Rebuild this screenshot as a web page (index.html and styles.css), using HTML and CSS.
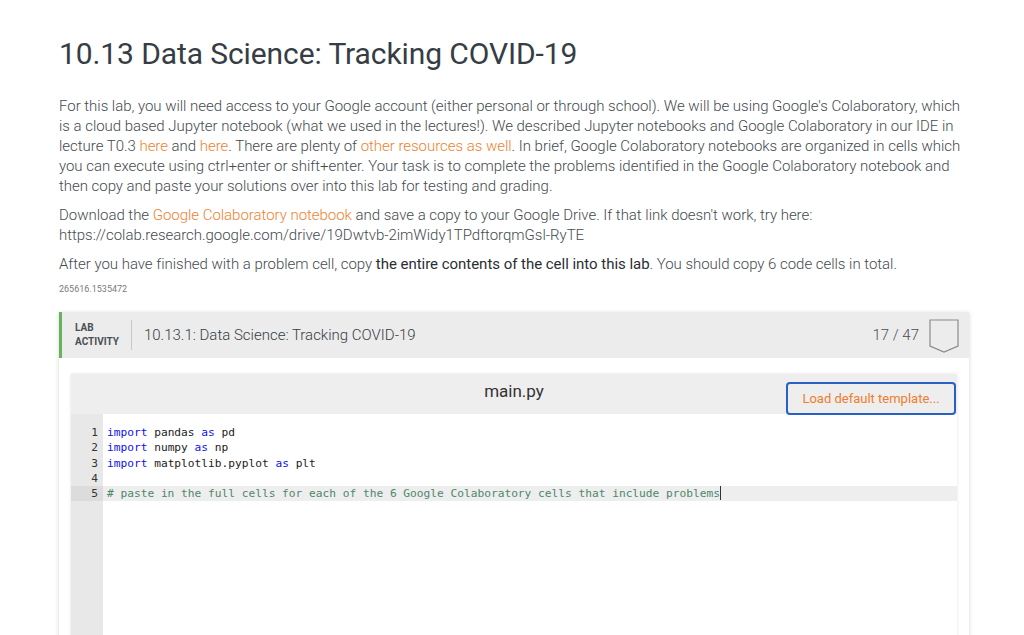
FILE: index.html
```html
<!DOCTYPE html>
<html>
<head>
<meta charset="utf-8">
<link rel="stylesheet" href="styles.css">
</head>
<body>
<main class="page">
  <h1 class="title">10.13 Data Science: Tracking COVID-19</h1>
  <p class="para">For this lab, you will need access to your Google account (either personal or through school). We will be using Google's Colaboratory, which is a cloud based Jupyter notebook (what we used in the lectures!). We described Jupyter notebooks and Google Colaboratory in our IDE in lecture T0.3 <a class="link">here</a> and <a class="link">here</a>. There are plenty of <a class="link">other resources as well</a>. In brief, Google Colaboratory notebooks are organized in cells which you can execute using ctrl+enter or shift+enter. Your task is to complete the problems identified in the Google Colaboratory notebook and then copy and paste your solutions over into this lab for testing and grading.</p>
  <p class="para">Download the <a class="link">Google Colaboratory notebook</a> and save a copy to your Google Drive. If that link doesn't work, try here: https://colab.research.google.com/drive/19Dwtvb-2imWidy1TPdftorqmGsl-RyTE</p>
  <p class="para">After you have finished with a problem cell, copy <strong class="strong">the entire contents of the cell into this lab</strong>. You should copy 6 code cells in total.</p>
  <div class="ident">265616.1535472</div>

  <section class="card">
    <header class="card-head">
      <div class="lab-label">LAB<br>ACTIVITY</div>
      <div class="card-title">10.13.1: Data Science: Tracking COVID-19</div>
      <div class="score">17 / 47</div>
      <svg class="badge" width="30" height="36" viewBox="0 0 30 36">
        <path d="M1 1 H29 V27 L15 33 L1 27 Z" fill="none" stroke="#8a8a8a" stroke-width="1.2"/>
      </svg>
    </header>
    <div class="card-body">
      <div class="editor">
        <div class="editor-head">
          <div class="file">main.py</div>
          <button class="load">Load default template...</button>
        </div>
        <div class="code">
          <div class="gutter">
            <div class="ln">1</div>
            <div class="ln">2</div>
            <div class="ln">3</div>
            <div class="ln">4</div>
            <div class="ln active">5</div>
          </div>
          <div class="lines">
            <div class="line"><span class="kw">import</span> pandas <span class="kw">as</span> pd</div>
            <div class="line"><span class="kw">import</span> numpy <span class="kw">as</span> np</div>
            <div class="line"><span class="kw">import</span> matplotlib.pyplot <span class="kw">as</span> plt</div>
            <div class="line">&nbsp;</div>
            <div class="line active"><span class="cm"># paste in the full cells for each of the 6 Google Colaboratory cells that include problems</span><span class="cursor"></span></div>
          </div>
        </div>
      </div>
    </div>
  </section>
</main>
</body>
</html>
```
FILE: styles.css
```css
html, body {
  margin: 0;
  padding: 0;
  background: #ffffff;
}
body {
  font-family: Roboto, "Liberation Sans", sans-serif;
  color: #4a4f55;
  overflow: hidden;
}
.page {
  width: 910px;
  margin-left: 59px;
  padding-top: 34px;
}
.title {
  margin: 0 0 22px 0;
  font-weight: 400;
  font-size: 30px;
  line-height: 40px;
  color: #363d44;
  letter-spacing: -0.1px;
}
.para {
  margin: 0 0 9px 0;
  font-size: 15px;
  font-weight: 300;
  line-height: 20px;
  color: #454a50;
  padding-right: 4px;
  letter-spacing: -0.03px;
}
.link {
  color: #f07f2d;
  text-decoration: none;
}
.strong {
  font-weight: 400;
  color: #2a2e33;
}
.ident {
  font-size: 9px;
  color: #7a7a7a;
  margin-top: 6px;
  line-height: 12px;
}
.card {
  margin-top: 17px;
  box-shadow: 0 1px 4px rgba(0,0,0,0.18);
  background: #fff;
}
.card-head {
  height: 46px;
  background: #ececec;
  border-left: 3px solid #66b35a;
  display: flex;
  align-items: center;
  padding: 0 10px 0 13px;
}
.lab-label {
  font-size: 10px;
  font-weight: 700;
  line-height: 14px;
  color: #4a4f55;
  padding-right: 12px;
  border-right: 1px solid #c8c8c8;
  height: 30px;
  display: flex;
  align-items: center;
}
.card-title {
  font-size: 15px;
  font-weight: 300;
  color: #363d44;
  margin-left: 12px;
  flex: 1;
}
.score {
  font-size: 15px;
  font-weight: 300;
  color: #4a4f55;
  margin-right: 10px;
}
.badge {
  display: block;
  margin-top: 4px;
}
.card-body {
  padding: 16px 12px 0 12px;
}
.editor {
  box-shadow: 0 0 3px rgba(0,0,0,0.12);
}
.editor-head {
  height: 40px;
  background: #eeeeee;
  display: flex;
  align-items: center;
  justify-content: center;
  position: relative;
}
.file {
  font-size: 17px;
  font-weight: 400;
  color: #333;
  margin-top: -6px;
}
.load {
  position: absolute;
  right: 1px;
  top: 8px;
  height: 33px;
  width: 170px;
  border: 2px solid #2960c4;
  border-radius: 4px;
  background: #eeeeee;
  color: #ef7d2b;
  font-family: Roboto, "Liberation Sans", sans-serif;
  font-size: 13px;
  font-weight: 400;
  padding: 0;
}
.code {
  display: flex;
  height: 230px;
  background: #fff;
  font-family: "DejaVu Sans Mono", "Liberation Mono", monospace;
  font-size: 11.2px;
  line-height: 15.3px;
  padding-top: 0;
}
.gutter {
  width: 32px;
  background: #e8e8e8;
  padding-top: 11px;
  flex: none;
}
.ln {
  text-align: right;
  padding-right: 5px;
  color: #333;
}
.ln.active {
  background: #dcdcdc;
}
.lines {
  flex: 1;
  padding-top: 11px;
}
.line {
  padding-left: 4px;
  color: #222;
  white-space: pre;
}
.line.active {
  background: #eeeeee;
}
.kw {
  color: #1010f0;
}
.cm {
  color: #4c886b;
}
.cursor {
  display: inline-block;
  width: 1px;
  height: 14px;
  background: #333;
  vertical-align: -3px;
}
```
